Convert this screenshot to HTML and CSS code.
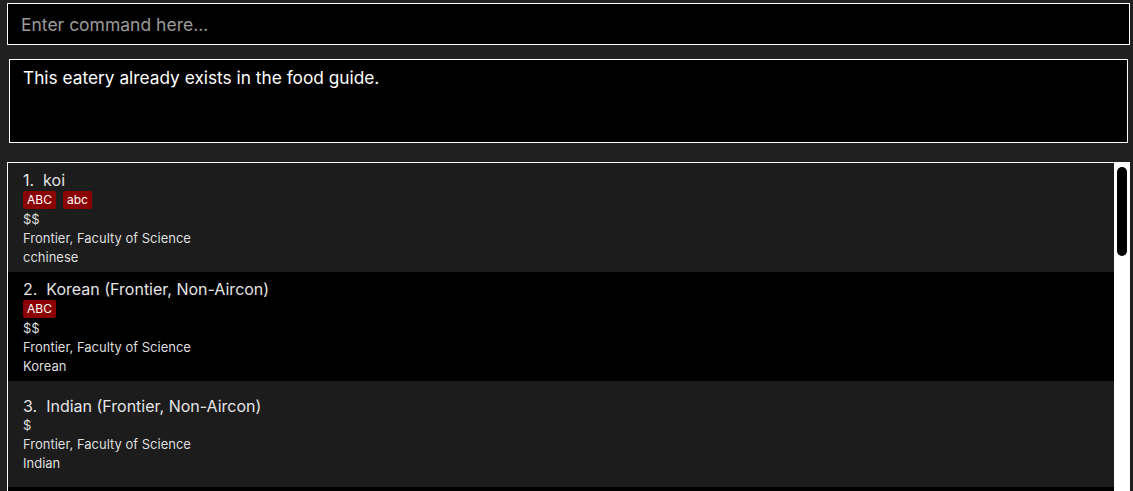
FILE: index.html
```html
<!DOCTYPE html>
<html>
<head>
<meta charset="utf-8">
<link rel="stylesheet" href="styles.css">
</head>
<body>
<div class="app">
  <div class="command-box">
    <input class="command-input" type="text" placeholder="Enter command here...">
  </div>
  <div class="result-box">This eatery already exists in the food guide.</div>
  <div class="list-panel">
    <div class="list">
      <div class="card odd">
        <div class="title">1.&nbsp; koi</div>
        <div class="tags"><span class="tag">ABC</span><span class="tag">abc</span></div>
        <div class="line">$$</div>
        <div class="line">Frontier, Faculty of Science</div>
        <div class="line">cchinese</div>
      </div>
      <div class="card even">
        <div class="title">2.&nbsp; Korean (Frontier, Non-Aircon)</div>
        <div class="tags"><span class="tag">ABC</span></div>
        <div class="line">$$</div>
        <div class="line">Frontier, Faculty of Science</div>
        <div class="line">Korean</div>
      </div>
      <div class="card odd notags">
        <div class="title">3.&nbsp; Indian (Frontier, Non-Aircon)</div>
        <div class="line">$</div>
        <div class="line">Frontier, Faculty of Science</div>
        <div class="line">Indian</div>
      </div>
      <div class="card even"></div>
    </div>
    <div class="scrollbar"><div class="thumb"></div></div>
  </div>
</div>
</body>
</html>
```

FILE: styles.css
```css
html, body {
  margin: 0;
  padding: 0;
  background: #202020;
  height: 100%;
  overflow: hidden;
}
body {
  font-family: Inter, "Noto Sans", sans-serif;
}
.app {
  display: flex;
  flex-direction: column;
  padding: 3px 3px 0 7px;
}
.command-box {
  height: 42px;
  box-sizing: border-box;
  border: 1px solid #ffffff;
  background: #000;
  display: flex;
  align-items: center;
}
.command-input {
  flex: 1;
  background: transparent;
  border: none;
  outline: none;
  color: #fff;
  font-family: Inter, sans-serif;
  font-size: 17.5px;
  padding: 0 0 0 13px;
}
.command-input::placeholder {
  color: #9a9a9a;
}
.result-box {
  margin: 14px 2px 0 2px;
  height: 84px;
  box-sizing: border-box;
  border: 1px solid #ffffff;
  background: #000;
  color: #ffffff;
  font-size: 17.3px;
  padding: 7px 13px;
  line-height: 22px;
}
.list-panel {
  margin-top: 19px;
  border: 1px solid #ffffff;
  border-right: none;
  border-bottom: none;
  display: flex;
  height: 340px;
}
.list {
  flex: 1;
  overflow: hidden;
}
.card {
  box-sizing: border-box;
  padding: 7px 15px 0 15px;
  height: 109px;
  color: #dedede;
}
.card.odd { background: #1c1c1c; }
.card.even { background: #000; }
.card.notags {
  height: 106px;
  padding-top: 15px;
}
.title {
  font-size: 16px;
  line-height: 20px;
  color: #e4e4e4;
}
.tags {
  display: flex;
  gap: 7px;
  margin-top: 1px;
  margin-bottom: 1px;
}
.tag {
  background: #8b0000;
  color: #fff;
  font-size: 12px;
  line-height: 18px;
  padding: 0 4px;
  border-radius: 2px;
}
.line {
  font-size: 13px;
  line-height: 19px;
}
.scrollbar {
  width: 16px;
  background: #ffffff;
  padding: 4px 3px 0 3px;
  box-sizing: border-box;
}
.thumb {
  width: 10px;
  height: 89px;
  background: #000;
  border-radius: 5px;
}
```
